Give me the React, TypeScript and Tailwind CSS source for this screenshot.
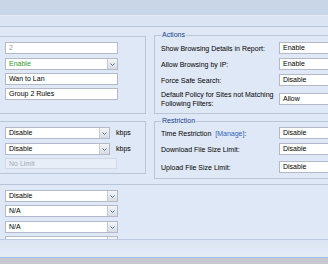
import React from 'react'

function Chevron() {
  return (
    <svg width="5" height="3" viewBox="0 0 5 3">
      <path d="M0.5 0.5 L2.5 2.5 L4.5 0.5" stroke="#4e6f9c" fill="none" strokeWidth="1" />
    </svg>
  )
}

function Select({ value, width = 'w-[113px]', tone = 'text-black' }: { value: string; width?: string; tone?: string }) {
  return (
    <div className={`flex h-[12px] shrink-0 ${width} border border-[#b5b8c8] bg-white`}>
      <span className={`flex-1 truncate pl-[3px] leading-[10px] ${tone}`}>{value}</span>
      <span className="flex w-[10px] items-center justify-center border-l border-[#c6cbd3] bg-gradient-to-b from-[#f4f5f7] to-[#d8dce2]">
        <Chevron />
      </span>
    </div>
  )
}

function Input({ value, tone = 'text-black' }: { value: string; tone?: string }) {
  return (
    <div className={`h-[12px] w-[113px] shrink-0 truncate border border-[#b5b8c8] bg-white pl-[3px] leading-[10px] ${tone}`}>
      {value}
    </div>
  )
}

function RightRow({ label, value, tall = false }: { label: React.ReactNode; value: string; tall?: boolean }) {
  return (
    <div className={`flex items-center ${tall ? 'h-[18px]' : 'h-[12px]'}`}>
      <div className="w-[118px] shrink-0 leading-[9px]">{label}</div>
      <div className="h-[12px] w-[70px] shrink-0 border border-[#b5b8c8] bg-white pl-[3px] leading-[10px]">{value}</div>
    </div>
  )
}

export default function App() {
  return (
    <div className="h-[264px] w-[328px] overflow-hidden bg-[#dfe8f6] font-['Liberation_Sans',Arial,sans-serif] text-[7px] text-black">
      {/* header */}
      <div className="h-[16px] border-b border-[#e6edf7] bg-[#c9d6e7]" />
      <div className="h-[11px] border-b border-[#b7c8de] bg-[#dae4f2]" />

      {/* main form */}
      <div className="flex h-[157px] pt-[9px]">
        <div className="-ml-[4px] flex w-[150px] shrink-0 flex-col gap-[7px]">
          <div className="flex h-[78px] flex-col border border-[#b8c6d8] pl-[8px] pt-[5px]">
            <Input value="2" tone="text-[#9a9a9a]" />
            <div className="mt-[4px]">
              <Select value="Enable" tone="text-[#2f9a2f]" />
            </div>
            <div className="mt-[3px]">
              <Input value="Wan to Lan" />
            </div>
            <div className="mt-[3px]">
              <Input value="Group 2 Rules" />
            </div>
          </div>

          <div className="flex h-[53px] flex-col border border-[#b8c6d8] pl-[8px] pt-[5px]">
            <div className="flex items-center gap-[6px]">
              <Select value="Disable" width="w-[105px]" />
              <span>kbps</span>
            </div>
            <div className="mt-[4px] flex items-center gap-[6px]">
              <Select value="Disable" width="w-[105px]" />
              <span>kbps</span>
            </div>
            <div className="mt-[3px] h-[11px] w-[112px] border border-[#d0d9e5] bg-[#e8eef7] pl-[3px] leading-[9px] text-[#a3abb7]">
              No Limit
            </div>
          </div>
        </div>

        <div className="-mt-[1px] ml-[8px] flex w-[200px] shrink-0 flex-col gap-[7px]">
          <div className="relative flex h-[79px] flex-col gap-[4px] border border-[#b8c6d8] pl-[6px] pt-[6px]">
            <span className="absolute -top-[5px] left-[6px] bg-[#dfe8f6] px-[1px] leading-[8px] text-[#15428b]">Actions</span>
            <RightRow label="Show Browsing Details in Report:" value="Enable" />
            <RightRow label="Allow Browsing by IP:" value="Enable" />
            <RightRow label="Force Safe Search:" value="Disable" />
            <RightRow
              tall
              label={
                <>
                  Default Policy for Sites not Matching
                  <br />
                  Following Filters:
                </>
              }
              value="Allow"
            />
          </div>

          <div className="relative flex h-[58px] flex-col border border-[#b8c6d8] pl-[6px] pt-[5px]">
            <span className="absolute -top-[5px] left-[6px] bg-[#dfe8f6] px-[1px] leading-[8px] text-[#15428b]">Restriction</span>
            <RightRow
              label={
                <>
                  Time Restriction <span className="ml-[2px] text-[#3162b8]">[Manage]</span>:
                </>
              }
              value="Disable"
            />
            <div className="mt-[4px]">
              <RightRow label="Download File Size Limit:" value="Disable" />
            </div>
            <div className="mt-[6px]">
              <RightRow label="Upload File Size Limit:" value="Disable" />
            </div>
          </div>
        </div>
      </div>

      {/* scrolling list */}
      <div className="flex h-[55px] flex-col overflow-hidden border-t border-[#b8c6d8] pl-[5px] pt-[5px]">
        <Select value="Disable" />
        <div className="mt-[3px]">
          <Select value="N/A" />
        </div>
        <div className="mt-[4px]">
          <Select value="N/A" />
        </div>
        <div className="mt-[3px]">
          <Select value="" />
        </div>
      </div>

      {/* footer */}
      <div className="h-[18px] border-t border-[#bccbe0] bg-gradient-to-b from-[#dbe5f3] to-[#e3ebf6]" />
      <div className="h-[1px] bg-[#9fbde6]" />
      <div className="h-[6px] bg-[#c6cace]" />
    </div>
  )
}
